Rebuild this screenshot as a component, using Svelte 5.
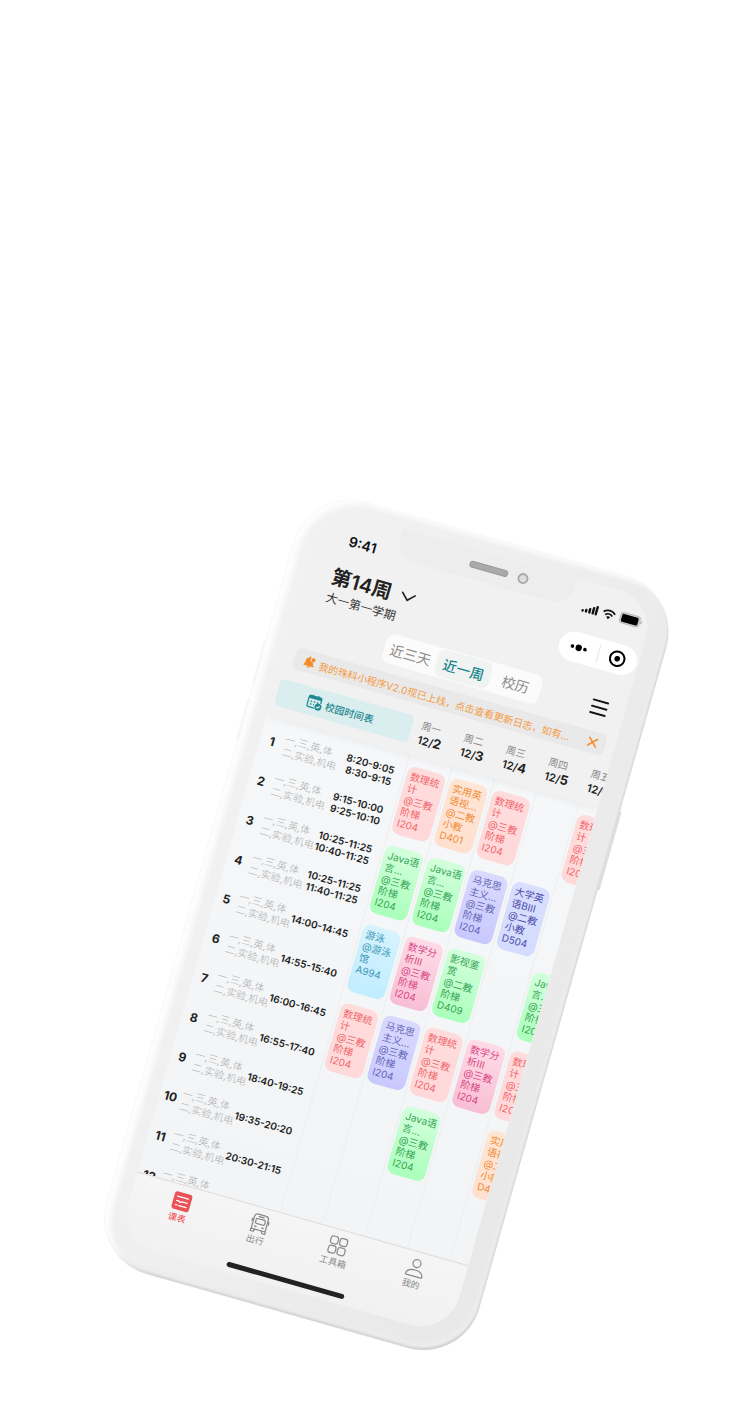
<script>
  const notice = '我的珠科小程序V2.0现已上线，点击查看更新日志，如有...';

  const days = [
    ['周一', 2],
    ['周二', 3],
    ['周三', 4],
    ['周四', 5],
    ['周五', 6]
  ];

  const periods = [
    ['8:20-9:05', '8:30-9:15'],
    ['9:15-10:00', '9:25-10:10'],
    ['10:25-11:25', '10:40-11:25'],
    ['10:25-11:25', '11:40-11:25'],
    ['14:00-14:45'],
    ['14:55-15:40'],
    ['16:00-16:45'],
    ['16:55-17:40'],
    ['18:40-19:25'],
    ['19:35-20:20'],
    ['20:30-21:15'],
    []
  ];

  const stats = { tone: 'red', lines: ['数理统', '计', '@三教', '阶梯', 'I204'] };
  const english = { tone: 'orange', lines: ['实用英', '语视...', '@二教', '小教', 'D401'] };
  const java = { tone: 'green', lines: ['Java语', '言...', '@三教', '阶梯', 'I204'] };
  const marx = { tone: 'indigo', lines: ['马克思', '主义...', '@三教', '阶梯', 'I204'] };
  const college = { tone: 'blue', lines: ['大学英', '语BIII', '@二教', '小教', 'D504'] };
  const swim = { tone: 'cyan', lines: ['游泳', '@游泳', '馆', 'A994'] };
  const maths = { tone: 'pink', lines: ['数学分', '析III', '@三教', '阶梯', 'I204'] };
  const film = { tone: 'green', lines: ['影视鉴', '赏', '@二教', '阶梯', 'D409'] };

  const timetable = [
    [stats, english, stats, null, stats],
    [java, java, marx, college, null],
    [swim, maths, film, null, java],
    [stats, marx, stats, maths, stats],
    [null, null, java, null, english]
  ];
</script>

<main>
  <div class="phone">
    <div class="key volume-a"></div>
    <div class="key volume-b"></div>
    <div class="key power"></div>
    <div class="screen">
      <div class="notch"><span class="speaker"></span><span class="camera"></span></div>

      <header>
        <div class="status">
          <span>9:41</span>
          <div class="signals">
            <svg width="17" height="11" viewBox="0 0 17 11" aria-hidden="true">
              <g stroke="#111" stroke-width="2.4" stroke-linecap="round">
                <path d="M1.5 8.6v.4M5 7.4V9M8.5 5.6V9M12 3.6V9M15.2 1.6V9" />
              </g>
            </svg>
            <svg width="14" height="11" viewBox="0 0 14 11" aria-hidden="true">
              <path d="M1 4.2c3.4-3.3 8.6-3.3 12 0M3.3 6.7c2.1-2 5.3-2 7.4 0" fill="none" stroke="#111" stroke-width="1.8" />
              <path d="M5 8.3c1.2-1 2.8-1 4 0L7 10.5z" fill="#111" />
            </svg>
            <svg width="23" height="12" viewBox="0 0 23 12" aria-hidden="true">
              <rect x=".5" y=".5" width="20" height="11" rx="3" fill="#ccc" stroke="#bbb" />
              <rect x="2" y="2" width="17" height="8" rx="1.5" fill="#000" />
              <path d="M21.5 4v4c1-.4 1.5-1 1.5-2s-.5-1.6-1.5-2z" fill="#aaa" />
            </svg>
          </div>
        </div>

        <div class="title">
          <div>
            <h1>
              第14周
              <svg width="16" height="10" viewBox="0 0 16 10" aria-hidden="true">
                <path d="M1.5 1.5 8 8l6.5-6.500" fill="none" stroke="#222" stroke-width="1.7" stroke-linecap="round" />
              </svg>
            </h1>
            <p>大一第一学期</p>
          </div>
          <div class="capsule">
            <button aria-label="更多">
              <svg width="18" height="8" viewBox="0 0 18 8"><circle cx="2.5" cy="4" r="1.8" /><circle cx="9" cy="4" r="3.2" /><circle cx="15.5" cy="4" r="1.8" /></svg>
            </button>
            <button aria-label="关闭">
              <svg width="18" height="18" viewBox="0 0 18 18"><circle cx="9" cy="9" r="7.3" fill="none" stroke="#000" stroke-width="2" /><circle cx="9" cy="9" r="2.8" /></svg>
            </button>
          </div>
        </div>

        <div class="views">
          <nav>
            <button>近三天</button>
            <button class="on">近一周</button>
            <button>校历</button>
          </nav>
          <button class="menu" aria-label="菜单">
            <svg width="18" height="16" viewBox="0 0 18 16"><path d="M1.500 1.500h15M1.500 8h15M1.500 14.500h15" stroke="#151515" stroke-width="2" stroke-linecap="round" /></svg>
          </button>
        </div>

        <div class="notice">
          <svg width="12" height="12" viewBox="0 0 12 12" aria-hidden="true">
            <path d="M.5 9.400c1.300-.9 1.300-2 1.300-3.800C1.800 3.200 3 1.800 4.800 1.500V.4h1.600v1.200c-.5 1.400 0 2.900 1 3.700.8.5 1.500.6 2.200.4 0 1.600.2 2.700 1.500 3.700v.6H.5zM4 10.500h3.600c-.3 1.700-3.300 1.700-3.600 0z" fill="#f68a24" />
            <circle cx="9.200" cy="3.100" r="2" fill="#f68a24" />
          </svg>
          <span>{notice}</span>
          <button aria-label="关闭公告">
            <svg width="10" height="10" viewBox="0 0 10 10"><path d="M1 1l8 8M9 1 1 9" stroke="#f68f2d" stroke-width="1.600" stroke-linecap="round" /></svg>
          </button>
        </div>

        <div class="week">
          <button class="hours">
            <svg width="16" height="15" viewBox="0 0 16 15" aria-hidden="true">
              <path d="M2.500 1.500h10a1.500 1.500 0 0 1 1.500 1.500v4.300M8.500 13h-6A1.500 1.500 0 0 1 1 11.500V3a1.500 1.500 0 0 1 1.500-1.500" fill="none" stroke="#1f8a90" stroke-width="1.300" />
              <path d="M1 1.500h13v3H1zM4 .2h1.300v2H4zM9.700.2H11v2H9.700z" fill="#1f8a90" />
              <path d="M3.500 7.200h1.700M6.800 7.200h1.700M10 7.200h1.700M3.500 10h1.700M6.800 10h1" stroke="#1f8a90" stroke-width="1.300" />
              <circle cx="12.200" cy="11" r="3.500" fill="#1f8a90" />
              <path d="M10.600 11l1.200 1.200 2-2.300" fill="none" stroke="#fff" />
            </svg>
            校园时间表
          </button>
          {#each days as [name, date]}
            <div class="day"><span>{name}</span><strong>12/<b>{date}</b></strong></div>
          {/each}
        </div>
      </header>

      <section class="schedule">
        <ol>
          {#each periods as times, i}
            <li>
              <b>{i + 1}</b>
              <span class="rooms">一,三,英,体<br />二,实验,机电</span>
              <span class="times">{#each times as t}<time>{t}</time>{/each}</span>
            </li>
          {/each}
        </ol>
        <div class="grid">
          {#each days as _, c}
            <div class="column">
              {#each timetable as row}
                <div class="slot">
                  {#if row[c]}
                    <article class={row[c].tone}>
                      {#each row[c].lines as line}<span>{line}</span>{/each}
                    </article>
                  {/if}
                </div>
              {/each}
            </div>
          {/each}
        </div>
      </section>

      <footer>
        <nav>
          <a href="#timetable" class="on">
            <svg width="20" height="20" viewBox="0 0 20 20" aria-hidden="true"><rect x="1" y="1" width="18" height="18" rx="3" fill="#ea5459" /><path d="M4.500 5.800h11M4.500 14.500h1.500M8 14.500h7.500" stroke="#fff" stroke-width="1.300" stroke-linecap="round" /><path d="M4.500 10.200h2.500l1.500 1 1.500-1h5.500" fill="none" stroke="#fff" stroke-width="1.300" stroke-linecap="round" /></svg>
            课表
          </a>
          <a href="#travel">
            <svg width="20" height="20" viewBox="0 0 20 20" aria-hidden="true"><g fill="none" stroke="#888" stroke-width="1.200" stroke-linejoin="round"><path d="M2.800 16.500V4.500C2.800 2.300 4.500 1 6.500 1h7c2 0 3.700 1.300 3.700 3.500v12z" /><rect x="5.300" y="5.500" width="9.400" height="5" rx="1.200" /><path d="M7 3.200h6M5 13.600h2.500M12.500 13.600H15M2.800 6.500H1.500v3M17.200 6.500h1.300v3M2.500 16.500V19h3l1.300-2.500M17.500 16.500V19h-3l-1.300-2.500" /></g></svg>
            出行
          </a>
          <a href="#tools">
            <svg width="20" height="20" viewBox="0 0 20 20" aria-hidden="true"><g fill="none" stroke="#888" stroke-width="1.200"><rect x="1.500" y="1.500" width="7.500" height="7.500" rx="2.400" /><rect x="11" y="1.500" width="7.500" height="7.500" rx="2.400" /><rect x="1.500" y="11" width="7.500" height="7.500" rx="2.400" /><rect x="11" y="11" width="7.500" height="7.500" rx="2.400" /></g></svg>
            工具箱
          </a>
          <a href="#me">
            <svg width="20" height="20" viewBox="0 0 20 20" aria-hidden="true"><g fill="none" stroke="#888" stroke-width="1.200"><circle cx="10" cy="5.500" r="4" /><path d="M2.500 18.500c-.6 0-1-.4-.9-1 .5-3.300 3.500-5.300 8.400-5.300s7.900 2 8.400 5.300c.1.600-.3 1-.9 1z" /></g></svg>
            我的
          </a>
        </nav>
        <div class="home"></div>
      </footer>
    </div>
  </div>
</main>

<style>
  :global(body) { margin: 0; background: #fff; }
  * { box-sizing: border-box; }
  button { padding: 0; border: 0; background: none; font: inherit; color: inherit; }
  svg { display: block; flex: none; }
  h1, p, ol { margin: 0; padding: 0; }

  main {
    display: flex;
    justify-content: center;
    padding: 524px 0 74px 20px;
    overflow: hidden;
    font-family: Inter, "Noto Sans CJK SC", sans-serif;
    color: #222;
  }
  .phone {
    position: relative;
    flex: none;
    padding: 15px 22px 23px 21px;
    border-radius: 58px;
    background: linear-gradient(100deg, #f2f2f2, #efefef 40%, #e9e9e9 90%);
    box-shadow:
      inset 7px 3px 5px #fdfdfd,
      inset -1px -2px 2px #d2d2d2,
      inset -5px -6px 3px #ececec,
      0 0 1px #ddd;
    transform: rotate(15.8deg);
  }
  .key { position: absolute; width: 3px; background: #f7f7f7; border-radius: 2px; }
  .volume-a { left: -2px; top: 160px; height: 44px; }
  .volume-b { left: -2px; top: 220px; height: 44px; }
  .power { right: -2px; top: 228px; height: 82px; background: #dedede; }

  .screen {
    position: relative;
    display: flex;
    flex-direction: column;
    width: 344px;
    border-radius: 40px;
    overflow: hidden;
    background: #f1f1f1;
  }
  .notch {
    position: absolute;
    z-index: 3;
    top: 0;
    left: 80px;
    width: 182px;
    height: 30px;
    border-radius: 0 0 20px 20px;
    background: #ededed;
    display: flex;
    justify-content: center;
    align-items: center;
    gap: 10px;
    padding-left: 26px;
  }
  .speaker { width: 40px; height: 7px; border-radius: 4px; background: #aaa; border: 1px solid #999; }
  .camera { width: 11px; height: 11px; border-radius: 50%; background: #ddd; border: 2px solid #aaa; }

  header { position: relative; z-index: 1; padding-bottom: 10px; background: #f1f1f1; box-shadow: 0 2px 6px #0000000d; }
  .status {
    display: flex;
    justify-content: space-between;
    align-items: center;
    height: 52px;
    padding: 0 8px 0 32px;
    font-size: 14px;
    font-weight: 600;
    color: #111;
  }
  .signals { display: flex; align-items: center; gap: 4px; }
  .title { display: flex; justify-content: space-between; padding: 0 2px 0 25px; }
  h1 { display: flex; align-items: center; gap: 9px; font-size: 20px; line-height: 26px; font-weight: 600; }
  p { font-size: 12px; line-height: 18px; color: #333; }
  .capsule { display: flex; align-items: center; width: 80px; height: 30px; border-radius: 15px; background: #fff; }
  .capsule button { flex: 1; height: 18px; display: grid; place-items: center; }
  .capsule button + button { border-left: 1px solid #e5e5e5; }

  .views { display: flex; justify-content: space-between; align-items: center; padding: 8px 17px 9px 95px; }
  .views nav { display: flex; height: 30px; border-radius: 8px; background: #fbfbfb; color: #8c8c8c; font-size: 14px; }
  .views nav button { padding: 0 6px; }
  .views nav button:last-child { padding: 0 12px; }
  .views nav .on { background: #f1f2f2; border: solid #fbfbfb; border-width: 1px 0; padding: 0 7px; border-radius: 8px; color: #17868c; font-weight: 500; }

  .notice {
    display: flex;
    align-items: center;
    gap: 4px;
    height: 22px;
    margin: 0 10px 12px 11px;
    padding: 0 8px 0 10px;
    border-radius: 5px;
    background: #e9e9e9;
    color: #f59a42;
    font-size: 10px;
    white-space: nowrap;
  }
  .notice span { flex: 1; }

  .week { display: flex; padding-left: 4px; }
  .hours {
    flex: none;
    display: flex;
    justify-content: center;
    align-items: center;
    gap: 3px;
    width: 139px;
    height: 28px;
    padding-right: 8px;
    margin-right: 9px;
    border-radius: 5px;
    background: #daeeef;
    color: #1f8a90;
    font-size: 10px;
    font-weight: 500;
  }
  .day { flex: none; width: 44px; line-height: 14px; font-size: 10px; color: #888; }
  .day span, .day strong { display: block; white-space: nowrap; }
  .day strong { font-size: 11px; font-weight: 600; color: #222; }
  .day b { font-size: 13px; font-weight: 700; }

  .schedule { display: flex; height: 475px; padding-top: 4px; overflow: hidden; background: linear-gradient(#f5f7f8, #f2f4f6); }
  ol { flex: none; width: 148px; list-style: none; }
  li { display: flex; align-items: center; height: 41px; padding-right: 10px; font-size: 10px; line-height: 13px; white-space: nowrap; }
  li b { width: 25px; font-size: 12px; text-align: center; }
  .rooms { color: #aaa; font-weight: 300; }
  .times { margin-left: auto; text-align: right; font-weight: 600; line-height: 12px; }
  time { display: block; }

  .grid { flex: none; display: grid; grid-template-columns: repeat(5, 44px); margin-top: -4px; }
  .column { padding: 4px 2px 0 2px; border-left: 1px solid #eceef0; }
  .slot { height: 82px; padding: 6px 0; }
  article {
    height: 70px;
    padding: 4px 0 0 4px;
    border-radius: 8px;
    font-size: 10px;
    line-height: 12px;
    white-space: nowrap;
  }
  article span { display: block; }
  .red { background: linear-gradient(#ffdcdc, #ffd8d9); color: #f0666b; }
  .orange { background: linear-gradient(#ffe5d5, #ffe0cf); color: #f08c36; }
  .green { background: linear-gradient(#d3ffdc, #aaffbb); color: #36a456; }
  .indigo { background: linear-gradient(#dadaff, #c8c8ff); color: #6666b4; }
  .blue { background: linear-gradient(#dadeff, #d3dcff); color: #4b4ba8; }
  .cyan { background: linear-gradient(#d6f3ff, #c1edff); color: #3b98b5; }
  .pink { background: linear-gradient(#ffdbe7, #f8bed3); color: #d94884; }

  footer { position: relative; z-index: 1; height: 73px; padding: 6px 10px 0; border-top: 1px solid #ddd; background: linear-gradient(#f5f5f5, #f1f1f1); }
  footer nav { display: flex; }
  a { flex: 1; display: flex; flex-direction: column; align-items: center; font-size: 9px; line-height: 14px; color: #888; text-decoration: none; }
  a.on { color: #f2484e; }
  .home { width: 122px; height: 5px; margin: 21px auto 0; border-radius: 3px; background: #222; }
</style>
